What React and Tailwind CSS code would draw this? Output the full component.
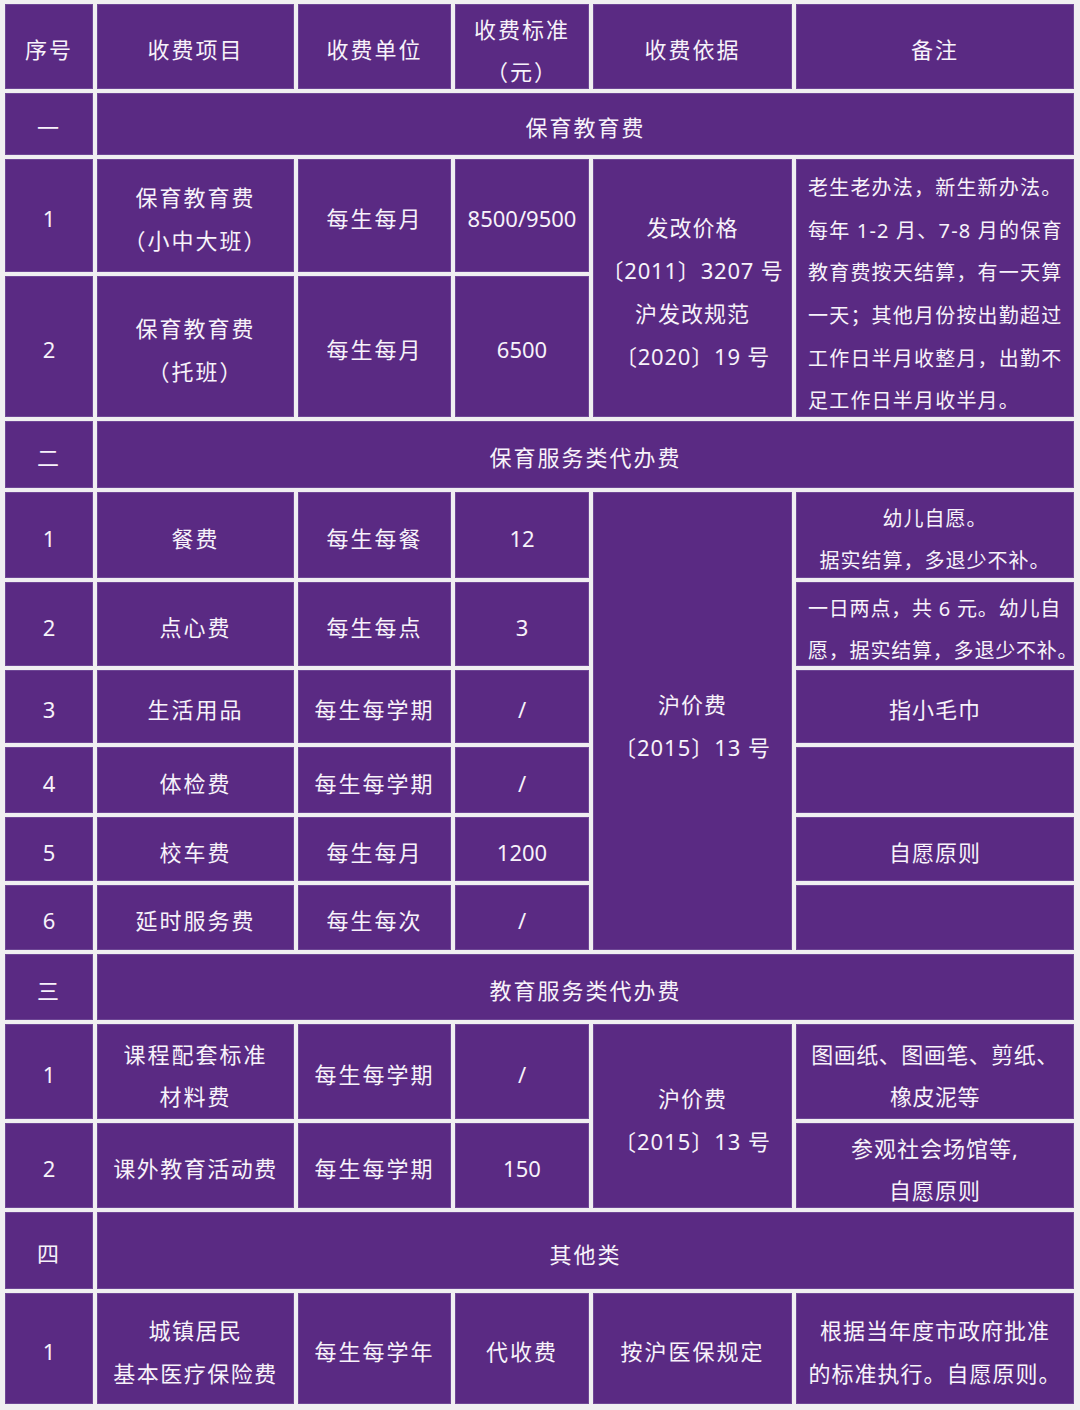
import React from 'react';

const font = { fontFamily: '"Noto Sans", "Noto Sans CJK SC", sans-serif' };

// one purple cell of the fee table; `t` holds the type classes so they never clash,
// `dy` nudges the glyphs down a little (the CJK face sits high in its line box)
const Cell = ({
  children,
  t = 'text-[22px] leading-[43px] tracking-[2px]',
  dy = 'translate-y-[3px]',
  className = '',
  ...rest
}) => (
  <td
    {...rest}
    className={`bg-[#5a2a83] ring-1 ring-inset ring-[#6e4795] text-[#f7f2fa] align-middle p-0 ${t} ${className || 'text-center'}`}
  >
    <div className={dy}>{children}</div>
  </td>
);

const Num = ({ children }) => <span className="tracking-normal">{children}</span>;

const App = () => {
  return (
    <div className="w-[1080px] h-[1410px] bg-[#f0eff1] pl-[1px]" style={font}>
      <table className="table-fixed border-separate border-spacing-[4px] w-[1077px]">
        <colgroup>
          <col className="w-[88px]" />
          <col className="w-[197px]" />
          <col className="w-[153px]" />
          <col className="w-[134px]" />
          <col className="w-[199px]" />
          <col className="w-[278px]" />
        </colgroup>
        <tbody>
          {/* header */}
          <tr className="h-[85px]">
            <Cell>序号</Cell>
            <Cell>收费项目</Cell>
            <Cell>收费单位</Cell>
            <Cell t="text-[22px] leading-[42px] tracking-[2px]">收费标准<br />（元）</Cell>
            <Cell>收费依据</Cell>
            <Cell>备注</Cell>
          </tr>

          {/* 一 保育教育费 */}
          <tr className="h-[62px]">
            <Cell>一</Cell>
            <Cell colSpan={5}>保育教育费</Cell>
          </tr>
          <tr className="h-[113px]">
            <Cell><Num>1</Num></Cell>
            <Cell>保育教育费<br />（小中大班）</Cell>
            <Cell>每生每月</Cell>
            <Cell><Num>8500/9500</Num></Cell>
            <Cell rowSpan={2} t="text-[22px] leading-[43px] tracking-[1px]" dy="translate-y-[4px]">
              发改价格<br />
              <span className="tracking-[0.8px]">〔2011〕3207 号</span><br />
              沪发改规范<br />
              <span className="tracking-[0.8px]">〔2020〕19 号</span>
            </Cell>
            <Cell
              rowSpan={2}
              t="text-[20px] leading-[42.6px] tracking-[1.2px] whitespace-nowrap"
              dy="translate-y-[7px]"
              className="text-left pl-3"
            >
              老生老办法，新生新办法。<br />
              每年 1-2 月、7-8 月的保育<br />
              教育费按天结算，有一天算<br />
              一天；其他月份按出勤超过<br />
              工作日半月收整月，出勤不<br />
              足工作日半月收半月。
            </Cell>
          </tr>
          <tr className="h-[141px]">
            <Cell><Num>2</Num></Cell>
            <Cell>保育教育费<br />（托班）</Cell>
            <Cell>每生每月</Cell>
            <Cell><Num>6500</Num></Cell>
          </tr>

          {/* 二 保育服务类代办费 */}
          <tr className="h-[67px]">
            <Cell>二</Cell>
            <Cell colSpan={5}>保育服务类代办费</Cell>
          </tr>
          <tr className="h-[86px]">
            <Cell><Num>1</Num></Cell>
            <Cell>餐费</Cell>
            <Cell>每生每餐</Cell>
            <Cell><Num>12</Num></Cell>
            <Cell rowSpan={6} t="text-[22px] leading-[43px] tracking-[1px]" dy="translate-y-[5px]">
              沪价费<br />
              <span className="tracking-[1px]">〔2015〕13 号</span>
            </Cell>
            <Cell t="text-[20px] leading-[42px] tracking-[1px] whitespace-nowrap" dy="translate-y-[5px]">
              幼儿自愿。<br />据实结算，多退少不补。
            </Cell>
          </tr>
          <tr className="h-[84px]">
            <Cell><Num>2</Num></Cell>
            <Cell>点心费</Cell>
            <Cell>每生每点</Cell>
            <Cell><Num>3</Num></Cell>
            <Cell
              t="text-[20px] leading-[42px] tracking-[0.8px] whitespace-nowrap"
              dy="translate-y-[6px]"
              className="text-left pl-3"
            >
              一日两点，共 6 元。幼儿自<br />愿，据实结算，多退少不补。
            </Cell>
          </tr>
          <tr className="h-[73px]">
            <Cell><Num>3</Num></Cell>
            <Cell>生活用品</Cell>
            <Cell>每生每学期</Cell>
            <Cell><Num>/</Num></Cell>
            <Cell t="text-[22px] leading-[43px] tracking-[1px]">指小毛巾</Cell>
          </tr>
          <tr className="h-[66px]">
            <Cell><Num>4</Num></Cell>
            <Cell>体检费</Cell>
            <Cell>每生每学期</Cell>
            <Cell><Num>/</Num></Cell>
            <Cell></Cell>
          </tr>
          <tr className="h-[64px]">
            <Cell><Num>5</Num></Cell>
            <Cell>校车费</Cell>
            <Cell>每生每月</Cell>
            <Cell><Num>1200</Num></Cell>
            <Cell t="text-[22px] leading-[43px] tracking-[1px]">自愿原则</Cell>
          </tr>
          <tr className="h-[65px]">
            <Cell><Num>6</Num></Cell>
            <Cell>延时服务费</Cell>
            <Cell>每生每次</Cell>
            <Cell><Num>/</Num></Cell>
            <Cell></Cell>
          </tr>

          {/* 三 教育服务类代办费 */}
          <tr className="h-[66px]">
            <Cell>三</Cell>
            <Cell colSpan={5}>教育服务类代办费</Cell>
          </tr>
          <tr className="h-[95px]">
            <Cell><Num>1</Num></Cell>
            <Cell t="text-[22px] leading-[42px] tracking-[2px]">课程配套标准<br />材料费</Cell>
            <Cell>每生每学期</Cell>
            <Cell><Num>/</Num></Cell>
            <Cell rowSpan={2} t="text-[22px] leading-[43px] tracking-[1px]" dy="translate-y-[4px]">
              沪价费<br />
              <span className="tracking-[1px]">〔2015〕13 号</span>
            </Cell>
            <Cell t="text-[22px] leading-[42px] tracking-[0.5px] whitespace-nowrap">
              图画纸、图画笔、剪纸、<br />橡皮泥等
            </Cell>
          </tr>
          <tr className="h-[85px]">
            <Cell><Num>2</Num></Cell>
            <Cell t="text-[22px] leading-[43px] tracking-[1.5px]">课外教育活动费</Cell>
            <Cell>每生每学期</Cell>
            <Cell><Num>150</Num></Cell>
            <Cell t="text-[22px] leading-[42px] tracking-[1px]">参观社会场馆等,<br />自愿原则</Cell>
          </tr>

          {/* 四 其他类 */}
          <tr className="h-[77px]">
            <Cell>四</Cell>
            <Cell colSpan={5} dy="translate-y-[4px]">其他类</Cell>
          </tr>
          <tr className="h-[111px]">
            <Cell><Num>1</Num></Cell>
            <Cell t="text-[22px] leading-[43px] tracking-[1.5px]">城镇居民<br />基本医疗保险费</Cell>
            <Cell>每生每学年</Cell>
            <Cell>代收费</Cell>
            <Cell>按沪医保规定</Cell>
            <Cell t="text-[22px] leading-[43px] tracking-[1px] whitespace-nowrap">
              根据当年度市政府批准<br />的标准执行。自愿原则。
            </Cell>
          </tr>
        </tbody>
      </table>
    </div>
  );
};

export default App;
